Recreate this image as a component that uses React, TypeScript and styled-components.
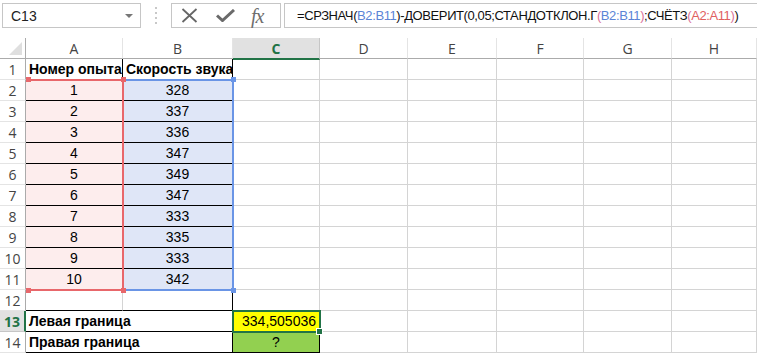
import React from "react";
import styled, { createGlobalStyle } from "styled-components";

const GlobalStyle = createGlobalStyle`
  html, body {
    margin: 0;
    padding: 0;
    background: #fff;
  }
  body {
    width: 757px;
    height: 354px;
    overflow: hidden;
    font-family: "Liberation Sans", Arial, sans-serif;
  }
`;

const GRID = "#d4d4d4";
const HEAD_LINE = "#ababab";
const GREEN = "#217346";

const Page = styled.div`
  display: flex;
  flex-direction: column;
`;

const Toolbar = styled.div`
  display: flex;
  align-items: flex-start;
  height: 38px;
  box-sizing: border-box;
  padding: 3px 0 0 2px;
`;

const NameBox = styled.div`
  display: flex;
  align-items: center;
  justify-content: space-between;
  box-sizing: border-box;
  width: 139px;
  height: 25px;
  border: 1px solid #c6c6c6;
  padding: 0 7px 0 8px;
  font-size: 14px;
  color: #222;
`;

const Arrow = styled.span`
  width: 0;
  height: 0;
  border-left: 4px solid transparent;
  border-right: 4px solid transparent;
  border-top: 4px solid #777;
`;

const Grip = styled.div`
  width: 30px;
  height: 25px;
  display: flex;
  flex-direction: column;
  align-items: center;
  justify-content: center;
  gap: 3px;

  span {
    width: 2px;
    height: 2px;
    background: #c8c8c8;
  }
`;

const Buttons = styled.div`
  display: flex;
  align-items: center;
  box-sizing: border-box;
  width: 110px;
  height: 25px;
  border: 1px solid #c6c6c6;
  padding-left: 9px;
  gap: 18px;
`;

const Fx = styled.span`
  font-family: "Liberation Serif", "Times New Roman", serif;
  font-style: italic;
  font-size: 20px;
  color: #6e6e6e;
  letter-spacing: -1px;
  margin-left: -2px;
  line-height: 1;
`;

const FormulaBox = styled.div`
  flex: 1;
  display: flex;
  align-items: center;
  box-sizing: border-box;
  height: 25px;
  margin-left: 3px;
  border: 1px solid #c6c6c6;
  border-right: none;
  padding-left: 12px;
  font-size: 13px;
  letter-spacing: -0.4px;
  color: #111;
  white-space: nowrap;
  overflow: hidden;
`;

const Ref = styled.span<{ $c: string }>`
  color: ${(p) => p.$c};
`;

const Sheet = styled.div`
  position: relative;
  display: grid;
  grid-template-columns: 26px 97px 110px 87px 88px 89px 87px 88px 1fr;
  grid-template-rows: repeat(15, 21px);
`;

const Corner = styled.div`
  position: relative;
  box-sizing: border-box;
  border-right: 1px solid ${HEAD_LINE};
  border-bottom: 1px solid ${HEAD_LINE};

  &::after {
    content: "";
    position: absolute;
    right: 3px;
    bottom: 3px;
    width: 0;
    height: 0;
    border-left: 13px solid transparent;
    border-bottom: 13px solid #dfdfdf;
  }
`;

const ColHead = styled.div<{ $active?: boolean }>`
  box-sizing: border-box;
  display: flex;
  align-items: center;
  justify-content: center;
  padding-top: 1px;
  font-family: "Open Sans", "Liberation Sans", sans-serif;
  font-size: 14px;
  color: ${(p) => (p.$active ? GREEN : "#444")};
  font-weight: ${(p) => (p.$active ? 700 : 400)};
  background: ${(p) => (p.$active ? "#e1e1e1" : "#fff")};
  border-right: 1px solid ${(p) => (p.$active ? "#c6c6c6" : "#e4e4e4")};
  border-bottom: ${(p) => (p.$active ? `2px solid ${GREEN}` : `1px solid ${HEAD_LINE}`)};
  margin-bottom: ${(p) => (p.$active ? "-1px" : "0")};
  position: relative;
  z-index: ${(p) => (p.$active ? 1 : 0)};
`;

const RowHead = styled.div<{ $active?: boolean }>`
  box-sizing: border-box;
  display: flex;
  align-items: center;
  justify-content: center;
  font-family: "Open Sans", "Liberation Sans", sans-serif;
  font-size: 14px;
  color: ${(p) => (p.$active ? GREEN : "#444")};
  font-weight: ${(p) => (p.$active ? 700 : 400)};
  background: ${(p) => (p.$active ? "#e1e1e1" : "#fff")};
  border-bottom: 1px solid ${(p) => (p.$active ? "#c6c6c6" : "#e4e4e4")};
  border-right: ${(p) => (p.$active ? `2px solid ${GREEN}` : `1px solid ${HEAD_LINE}`)};
`;

const Cell = styled.div<{
  $align?: "left" | "center" | "right";
  $bold?: boolean;
  $bg?: string;
  $bb?: string;
  $br?: string;
  $span?: number;
}>`
  box-sizing: border-box;
  display: flex;
  align-items: flex-end;
  justify-content: ${(p) =>
    p.$align === "center" ? "center" : p.$align === "right" ? "flex-end" : "flex-start"};
  padding: 0 3px 1px 3px;
  grid-column: span ${(p) => p.$span ?? 1};
  font-size: 14px;
  line-height: 18px;
  font-weight: ${(p) => (p.$bold ? 700 : 400)};
  color: #000;
  white-space: nowrap;
  background: ${(p) => p.$bg ?? "#fff"};
  border-right: 1px solid ${(p) => p.$br ?? GRID};
  border-bottom: 1px solid ${(p) => p.$bb ?? GRID};
`;

const Range = styled.div<{ $c: string; $col: number; $left?: boolean }>`
  position: absolute;
  pointer-events: none;
  grid-column: ${(p) => `${p.$col} / ${p.$col + 1}`};
  grid-row: 3 / 13;
  top: -1px;
  bottom: -1px;
  left: ${(p) => (p.$left ? "-1px" : "0")};
  right: -1px;
  border: 2px solid ${(p) => p.$c};
  border-left-width: ${(p) => (p.$left ? "2px" : "0")};
  z-index: ${(p) => (p.$left ? 2 : 3)};
`;

const Handle = styled.span<{ $c: string; $pos: string }>`
  position: absolute;
  width: 5px;
  height: 5px;
  background: ${(p) => p.$c};
  ${(p) => p.$pos}
`;

const Selection = styled.div`
  position: absolute;
  pointer-events: none;
  grid-column: 4 / 5;
  grid-row: 14 / 15;
  top: -1px;
  left: -1px;
  right: -1px;
  bottom: -1px;
  border: 2px solid ${GREEN};
  z-index: 4;

  &::after {
    content: "";
    position: absolute;
    right: -4px;
    bottom: -4px;
    width: 5px;
    height: 5px;
    background: ${GREEN};
    border: 1px solid #fff;
  }
`;

const XIcon = () => (
  <svg width="17" height="15" viewBox="0 0 17 15">
    <path d="M1.5 1 L15.5 14 M15.5 1 L1.5 14" stroke="#666" strokeWidth="1.8" fill="none" />
  </svg>
);

const CheckIcon = () => (
  <svg width="19" height="13" viewBox="0 0 19 13">
    <path d="M1 6.5 L6.5 11.5 L18 1" stroke="#6a6a6a" strokeWidth="3" fill="none" />
  </svg>
);

const COLS = ["A", "B", "C", "D", "E", "F", "G", "H"];
const A_VALS = [1, 2, 3, 4, 5, 6, 7, 8, 9, 10];
const B_VALS = [328, 337, 336, 347, 349, 347, 333, 335, 333, 342];

const PINK = "#fdeded";
const BLUE = "#dfe6f7";
const RED_LINE = "#e8676b";
const BLUE_LINE = "#6a95e6";

const Empty = ({ n }: { n: number }) => (
  <>
    {Array.from({ length: n }).map((_, i) => (
      <Cell key={i} />
    ))}
  </>
);

export default function App() {
  return (
    <Page>
      <GlobalStyle />
      <Toolbar>
        <NameBox>
          C13
          <Arrow />
        </NameBox>
        <Grip>
          <span />
          <span />
          <span />
          <span />
        </Grip>
        <Buttons>
          <XIcon />
          <CheckIcon />
          <Fx>fx</Fx>
        </Buttons>
        <FormulaBox>
          =СРЗНАЧ(<Ref $c="#5b84d6">B2:B11</Ref>)-ДОВЕРИТ(0,05;СТАНДОТКЛОН.Г
          <Ref $c="#d9739a">(</Ref>
          <Ref $c="#5b84d6">B2:B11</Ref>
          <Ref $c="#d9739a">)</Ref>;СЧЁТЗ
          <Ref $c="#d9739a">(</Ref>
          <Ref $c="#e0605f">A2:A11</Ref>
          <Ref $c="#d9739a">)</Ref>)
        </FormulaBox>
      </Toolbar>

      <Sheet>
        <Corner />
        {COLS.map((c) => (
          <ColHead key={c} $active={c === "C"}>
            {c}
          </ColHead>
        ))}

        <RowHead>1</RowHead>
        <Cell $bold $br="#000">
          Номер опыта
        </Cell>
        <Cell $bold $br="#000">
          Скорость звука
        </Cell>
        <Empty n={6} />

        {A_VALS.map((a, i) => (
          <React.Fragment key={a}>
            <RowHead>{i + 2}</RowHead>
            <Cell $align="center" $bg={PINK} $bb={i < 9 ? "#000" : PINK} $br={PINK}>
              {a}
            </Cell>
            <Cell $align="center" $bg={BLUE} $bb={i < 9 ? "#000" : BLUE} $br={BLUE}>
              {B_VALS[i]}
            </Cell>
            <Empty n={6} />
          </React.Fragment>
        ))}

        <RowHead>12</RowHead>
        <Cell $bb="#000" />
        <Cell $bb="#000" $br="#000" />
        <Empty n={6} />

        <RowHead $active>13</RowHead>
        <Cell $bold $span={2} $bb="#000" $br="#000">
          Левая граница
        </Cell>
        <Cell $align="right" $bg="#ffff00" $bb="#000" $br="#000">
          334,505036
        </Cell>
        <Empty n={5} />

        <RowHead>14</RowHead>
        <Cell $bold $span={2} $bb="#000" $br="#000">
          Правая граница
        </Cell>
        <Cell $align="center" $bg="#92d050" $bb="#000" $br="#000">
          ?
        </Cell>
        <Empty n={5} />

        <Range $c={BLUE_LINE} $col={3} $left>
          <Handle $c={BLUE_LINE} $pos="right: -4px; top: -4px;" />
          <Handle $c={BLUE_LINE} $pos="right: -4px; bottom: -4px;" />
        </Range>
        <Range $c={RED_LINE} $col={2}>
          <Handle $c={RED_LINE} $pos="left: 0; top: -4px;" />
          <Handle $c={RED_LINE} $pos="left: 0; bottom: -4px;" />
          <Handle $c={RED_LINE} $pos="right: -4px; top: -4px;" />
          <Handle $c={RED_LINE} $pos="right: -4px; bottom: -4px;" />
        </Range>
        <Selection />
      </Sheet>
    </Page>
  );
}
